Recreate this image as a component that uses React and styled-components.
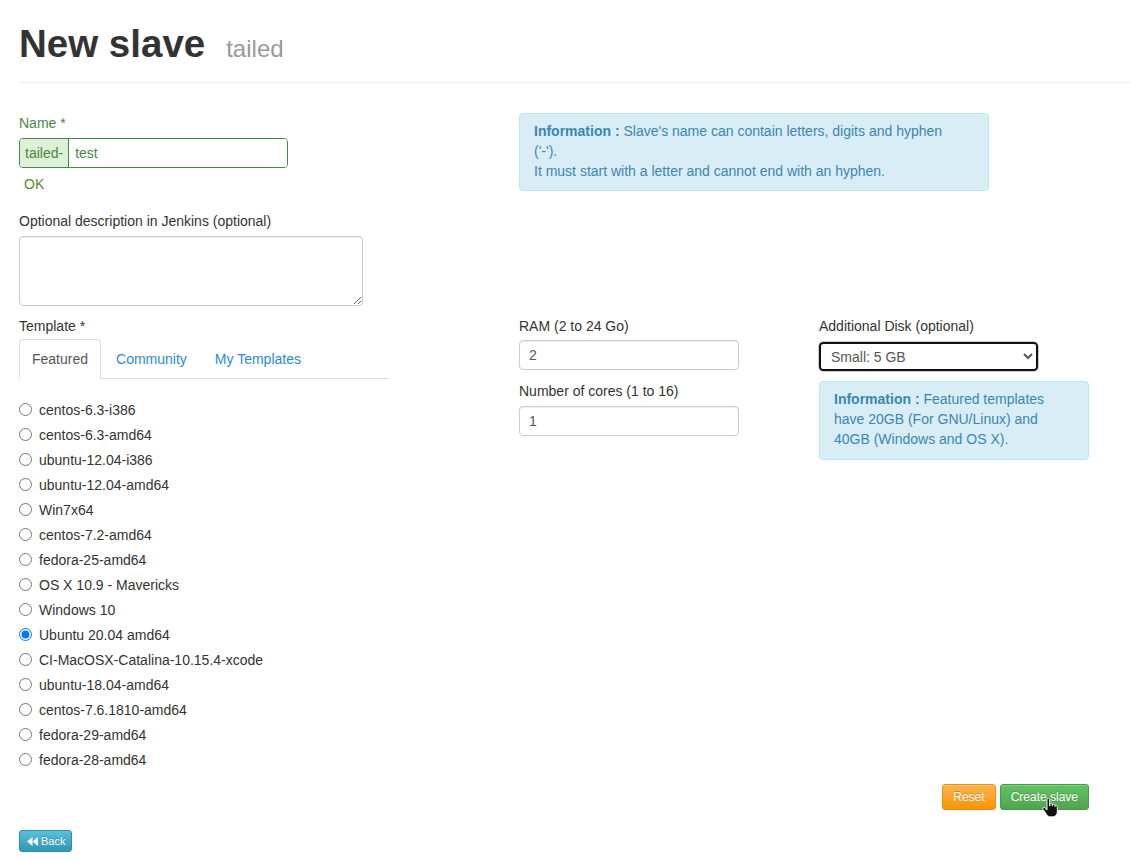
import React, { useState } from "react";
import styled, { createGlobalStyle } from "styled-components";

const templates = [
  "centos-6.3-i386",
  "centos-6.3-amd64",
  "ubuntu-12.04-i386",
  "ubuntu-12.04-amd64",
  "Win7x64",
  "centos-7.2-amd64",
  "fedora-25-amd64",
  "OS X 10.9 - Mavericks",
  "Windows 10",
  "Ubuntu 20.04 amd64",
  "CI-MacOSX-Catalina-10.15.4-xcode",
  "ubuntu-18.04-amd64",
  "centos-7.6.1810-amd64",
  "fedora-29-amd64",
  "fedora-28-amd64",
];

const tabs = ["Featured", "Community", "My Templates"];

const App = () => {
  const [tab, setTab] = useState("Featured");
  const [template, setTemplate] = useState("Ubuntu 20.04 amd64");
  const [name, setName] = useState("test");
  const [ram, setRam] = useState("2");
  const [cores, setCores] = useState("1");

  return (
    <Page>
      <GlobalStyle />
      <PageHeader>
        <Title>
          New slave<Small>tailed</Small>
        </Title>
      </PageHeader>

      <Form>
        <TopRow>
          <div>
            <Label $success>Name *</Label>
            <InputGroup>
              <Addon>tailed-</Addon>
              <NameInput value={name} onChange={(e) => setName(e.target.value)} />
            </InputGroup>
            <HelpBlock>OK</HelpBlock>

            <Label $mt="17px">Optional description in Jenkins (optional)</Label>
            <TextArea />
          </div>
          <div>
            <InfoBox $width="470px" $pr="40px">
              <b>Information :</b> Slave's name can contain letters, digits and hyphen
              ('-').
              <br />
              It must start with a letter and cannot end with an hyphen.
            </InfoBox>
          </div>
        </TopRow>

        <MainRow>
          <div>
            <Label $mb="3px">Template *</Label>
            <Tabs>
              {tabs.map((t) => (
                <Tab key={t} $active={t === tab} onClick={() => setTab(t)}>
                  {t}
                </Tab>
              ))}
            </Tabs>
            <RadioList>
              {templates.map((t) => (
                <RadioRow key={t}>
                  <Radio
                    type="radio"
                    name="template"
                    checked={template === t}
                    onChange={() => setTemplate(t)}
                  />
                  {t}
                </RadioRow>
              ))}
            </RadioList>
          </div>

          <div>
            <Label $mb="4px">RAM (2 to 24 Go)</Label>
            <TextInput value={ram} onChange={(e) => setRam(e.target.value)} />
            <Label $mt="11px" $mb="5px">
              Number of cores (1 to 16)
            </Label>
            <TextInput value={cores} onChange={(e) => setCores(e.target.value)} />
          </div>

          <div>
            <Label $mb="6px">Additional Disk (optional)</Label>
            <Select defaultValue="small">
              <option value="none">None</option>
              <option value="small">Small: 5 GB</option>
              <option value="medium">Medium: 10 GB</option>
              <option value="large">Large: 20 GB</option>
            </Select>
            <InfoBox $width="270px" $mt="10px" $pb="10px">
              <b>Information :</b> Featured templates have 20GB (For GNU/Linux) and
              40GB (Windows and OS X).
            </InfoBox>
          </div>
        </MainRow>

        <Actions>
          <Button $variant="warning">Reset</Button>
          <Button $variant="success">
            Create slave
            <Cursor viewBox="0 0 16 20" width="16" height="20">
              <path
                d="M5 1.5c0-.8.6-1.3 1.3-1.3s1.2.5 1.2 1.3V8h.3V6.6c0-.7.5-1.2 1.2-1.2s1.2.5 1.2 1.2V8h.3V7.3c0-.7.5-1.2 1.2-1.2s1.2.5 1.2 1.2V8.5h.2c0-.6.5-1 1.1-1s1.1.5 1.1 1.1v5.2c0 2.7-1.9 5-4.7 5H8.6c-1.6 0-2.7-.6-3.6-1.8L1.2 11.6c-.5-.6-.4-1.5.2-1.9.6-.4 1.4-.3 1.8.2L5 12V1.5z"
                fill="#111"
                stroke="#fff"
                strokeWidth="0.9"
              />
            </Cursor>
          </Button>
        </Actions>

        <BackButton>
          <svg viewBox="0 0 12 10" width="11" height="9">
            <path d="M6 0v10L0 5zM12 0v10L6 5z" fill="#fff" />
          </svg>
          Back
        </BackButton>
      </Form>
    </Page>
  );
};

export default App;

const GlobalStyle = createGlobalStyle`
  body {
    margin: 0;
    background: #fff;
    color: #333;
    font-family: "Liberation Sans", Arial, sans-serif;
    font-size: 14px;
    line-height: 20px;
  }
  * { box-sizing: border-box; }
`;

const Page = styled.div`
  padding: 22px 0 20px 19px;
`;

const PageHeader = styled.div`
  border-bottom: 1px solid #eee;
  padding-bottom: 7px;
`;

const Title = styled.h1`
  margin: 0 0 10px;
  font-size: 38.5px;
  line-height: 43px;
  height: 43px;
  font-weight: 700;
  color: #333;
`;

const Small = styled.small`
  margin-left: 21px;
  font-size: 24px;
  line-height: 1;
  font-weight: 400;
  color: #999;
`;

const Form = styled.div`
  width: 1070px;
  padding-top: 30px;
`;

const TopRow = styled.div`
  display: grid;
  grid-template-columns: 500px 470px;
`;

const MainRow = styled.div`
  display: grid;
  grid-template-columns: 500px 300px 270px;
  margin-top: 10px;
`;

const Label = styled.div`
  margin-top: ${(p) => p.$mt || "0"};
  margin-bottom: ${(p) => p.$mb || "5px"};
  color: ${(p) => (p.$success ? "#468847" : "#333")};
`;

const InputGroup = styled.div`
  display: flex;
  width: 269px;
  height: 30px;
  border: 1px solid #468847;
  border-radius: 4px;
  overflow: hidden;
  box-shadow: inset 0 1px 1px rgba(0, 0, 0, 0.075);
`;

const Addon = styled.span`
  display: flex;
  align-items: center;
  padding: 0 5px;
  background: #dff0d8;
  color: #468847;
  border-right: 1px solid #468847;
`;

const NameInput = styled.input`
  flex: 1;
  min-width: 0;
  border: 0;
  padding: 0 6px;
  font: inherit;
  color: #468847;
  outline: none;
`;

const HelpBlock = styled.div`
  margin-top: 6px;
  padding-left: 5px;
  color: #5a8a2e;
`;

const TextArea = styled.textarea`
  display: block;
  width: 344px;
  height: 70px;
  border: 1px solid #ccc;
  border-radius: 4px;
  box-shadow: inset 0 1px 1px rgba(0, 0, 0, 0.075);
  font: inherit;
  padding: 6px 12px;
`;

const InfoBox = styled.div`
  width: ${(p) => p.$width};
  margin-top: ${(p) => p.$mt || "0"};
  padding: 7px ${(p) => p.$pr || "14px"} ${(p) => p.$pb || "9px"} 14px;
  background: #d9edf7;
  border: 1px solid #bce8f1;
  border-radius: 4px;
  color: #3a87ad;

  b {
    font-weight: 700;
  }
`;

const Tabs = styled.div`
  display: flex;
  width: 370px;
  border-bottom: 1px solid #ddd;
`;

const Tab = styled.div`
  margin: 0 2px -1px 0;
  padding: 9px 12px;
  border: 1px solid ${(p) => (p.$active ? "#ddd" : "transparent")};
  border-bottom-color: ${(p) => (p.$active ? "#fff" : "transparent")};
  border-radius: 4px 4px 0 0;
  background: ${(p) => (p.$active ? "#fff" : "transparent")};
  color: ${(p) => (p.$active ? "#555" : "#2a8bd5")};
  cursor: pointer;
`;

const RadioList = styled.div`
  margin-top: 18px;
`;

const RadioRow = styled.label`
  display: flex;
  align-items: center;
  height: 25px;
  color: #333;
`;

const Radio = styled.input`
  width: 13px;
  height: 13px;
  margin: 0 7px 0 0;
`;

const TextInput = styled.input`
  display: block;
  width: 220px;
  height: 30px;
  padding: 0 9px;
  border: 1px solid #ccc;
  border-radius: 4px;
  box-shadow: inset 0 1px 1px rgba(0, 0, 0, 0.075);
  font: inherit;
  color: #555;
`;

const Select = styled.select`
  display: block;
  width: 219px;
  height: 29px;
  padding: 0 6px;
  border: 2px solid #111;
  border-radius: 4px;
  font: inherit;
  color: #555;
  background: #fff;
  outline: 1px solid #ccc;
  outline-offset: 0;
`;

const Actions = styled.div`
  display: flex;
  justify-content: flex-end;
  gap: 4px;
  margin-top: 12px;
  width: 1070px;
`;

const variants = {
  warning: {
    top: "#fbb450",
    bottom: "#f89406",
    border: "#e8920f",
  },
  success: {
    top: "#62c462",
    bottom: "#51a351",
    border: "#4a9a4a",
  },
  info: {
    top: "#5bc0de",
    bottom: "#2f96b4",
    border: "#2d8fac",
  },
};

const Button = styled.button`
  position: relative;
  height: 26px;
  padding: 0 10px;
  font: inherit;
  font-size: 12px;
  color: #fff;
  border: 1px solid ${(p) => variants[p.$variant].border};
  border-radius: 3px;
  background: linear-gradient(
    ${(p) => variants[p.$variant].top},
    ${(p) => variants[p.$variant].bottom}
  );
  text-shadow: 0 -1px 0 rgba(0, 0, 0, 0.2);
  box-shadow: inset 0 1px 0 rgba(255, 255, 255, 0.2), 0 1px 2px rgba(0, 0, 0, 0.05);
`;

const Cursor = styled.svg`
  position: absolute;
  left: 41px;
  top: 13px;
`;

const BackButton = styled.button`
  display: flex;
  align-items: center;
  gap: 3px;
  margin-top: 20px;
  height: 22px;
  padding: 0 6px 0 7px;
  font: inherit;
  font-size: 11px;
  color: #fff;
  border: 1px solid ${variants.info.border};
  border-radius: 3px;
  background: linear-gradient(${variants.info.top}, ${variants.info.bottom});
  text-shadow: 0 -1px 0 rgba(0, 0, 0, 0.2);
`;
